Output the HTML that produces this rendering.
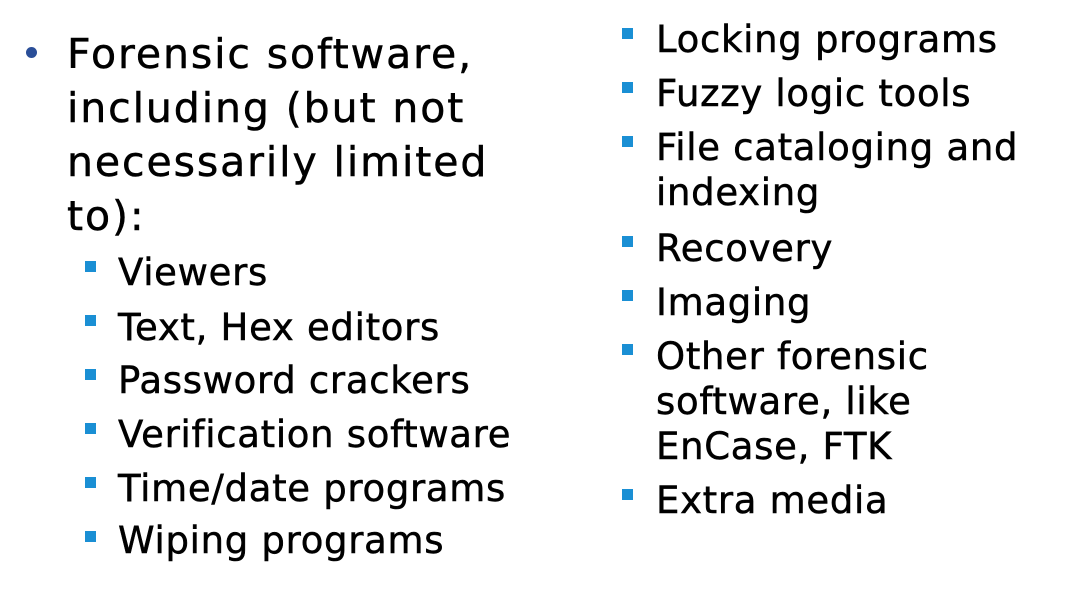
<!DOCTYPE html>
<html><head><meta charset="utf-8"><style>
html,body{margin:0;padding:0;background:#fff;width:1091px;height:595px;overflow:hidden;position:relative;font-family:"DejaVu Sans","Liberation Sans",sans-serif;color:#000}
.l{position:absolute;white-space:nowrap;line-height:1;-webkit-text-stroke:0.5px #000}
.m{font-size:41px;letter-spacing:1.9px}
.s{font-size:37px;letter-spacing:0.7px}
.sq{position:absolute;width:11px;height:11px;background:#1a8fd4}
.dot{position:absolute;width:11px;height:11px;border-radius:50%;background:#2a4e98}
</style></head><body>
<div class="dot" style="left:26px;top:47px"></div>
<div class="l m" style="left:67px;top:34px">Forensic software,</div>
<div class="l m" style="left:67px;top:88px">including (but not</div>
<div class="l m" style="left:67px;top:142px">necessarily limited</div>
<div class="l m" style="left:67px;top:196px">to):</div>

<div class="sq" style="left:85px;top:261px"></div><div class="l s" style="left:118px;top:254px">Viewers</div>
<div class="sq" style="left:85px;top:315px"></div><div class="l s" style="left:118px;top:309px">Text, Hex editors</div>
<div class="sq" style="left:85px;top:369px"></div><div class="l s" style="left:118px;top:362px">Password crackers</div>
<div class="sq" style="left:85px;top:423px"></div><div class="l s" style="left:118px;top:416px">Verification software</div>
<div class="sq" style="left:85px;top:477px"></div><div class="l s" style="left:118px;top:470px">Time/date programs</div>
<div class="sq" style="left:85px;top:531px"></div><div class="l s" style="left:118px;top:522px">Wiping programs</div>

<div class="sq" style="left:622px;top:28px"></div><div class="l s" style="left:656px;top:21px">Locking programs</div>
<div class="sq" style="left:622px;top:82px"></div><div class="l s" style="left:656px;top:75px">Fuzzy logic tools</div>
<div class="sq" style="left:622px;top:136px"></div><div class="l s" style="left:656px;top:129px">File cataloging and</div>
<div class="l s" style="left:656px;top:174px">indexing</div>
<div class="sq" style="left:622px;top:236px"></div><div class="l s" style="left:656px;top:230px">Recovery</div>
<div class="sq" style="left:622px;top:290px"></div><div class="l s" style="left:656px;top:284px">Imaging</div>
<div class="sq" style="left:622px;top:344px"></div><div class="l s" style="left:656px;top:338px">Other forensic</div>
<div class="l s" style="left:656px;top:383px">software, like</div>
<div class="l s" style="left:656px;top:428px">EnCase, FTK</div>
<div class="sq" style="left:622px;top:489px"></div><div class="l s" style="left:656px;top:482px">Extra media</div>
</body></html>
